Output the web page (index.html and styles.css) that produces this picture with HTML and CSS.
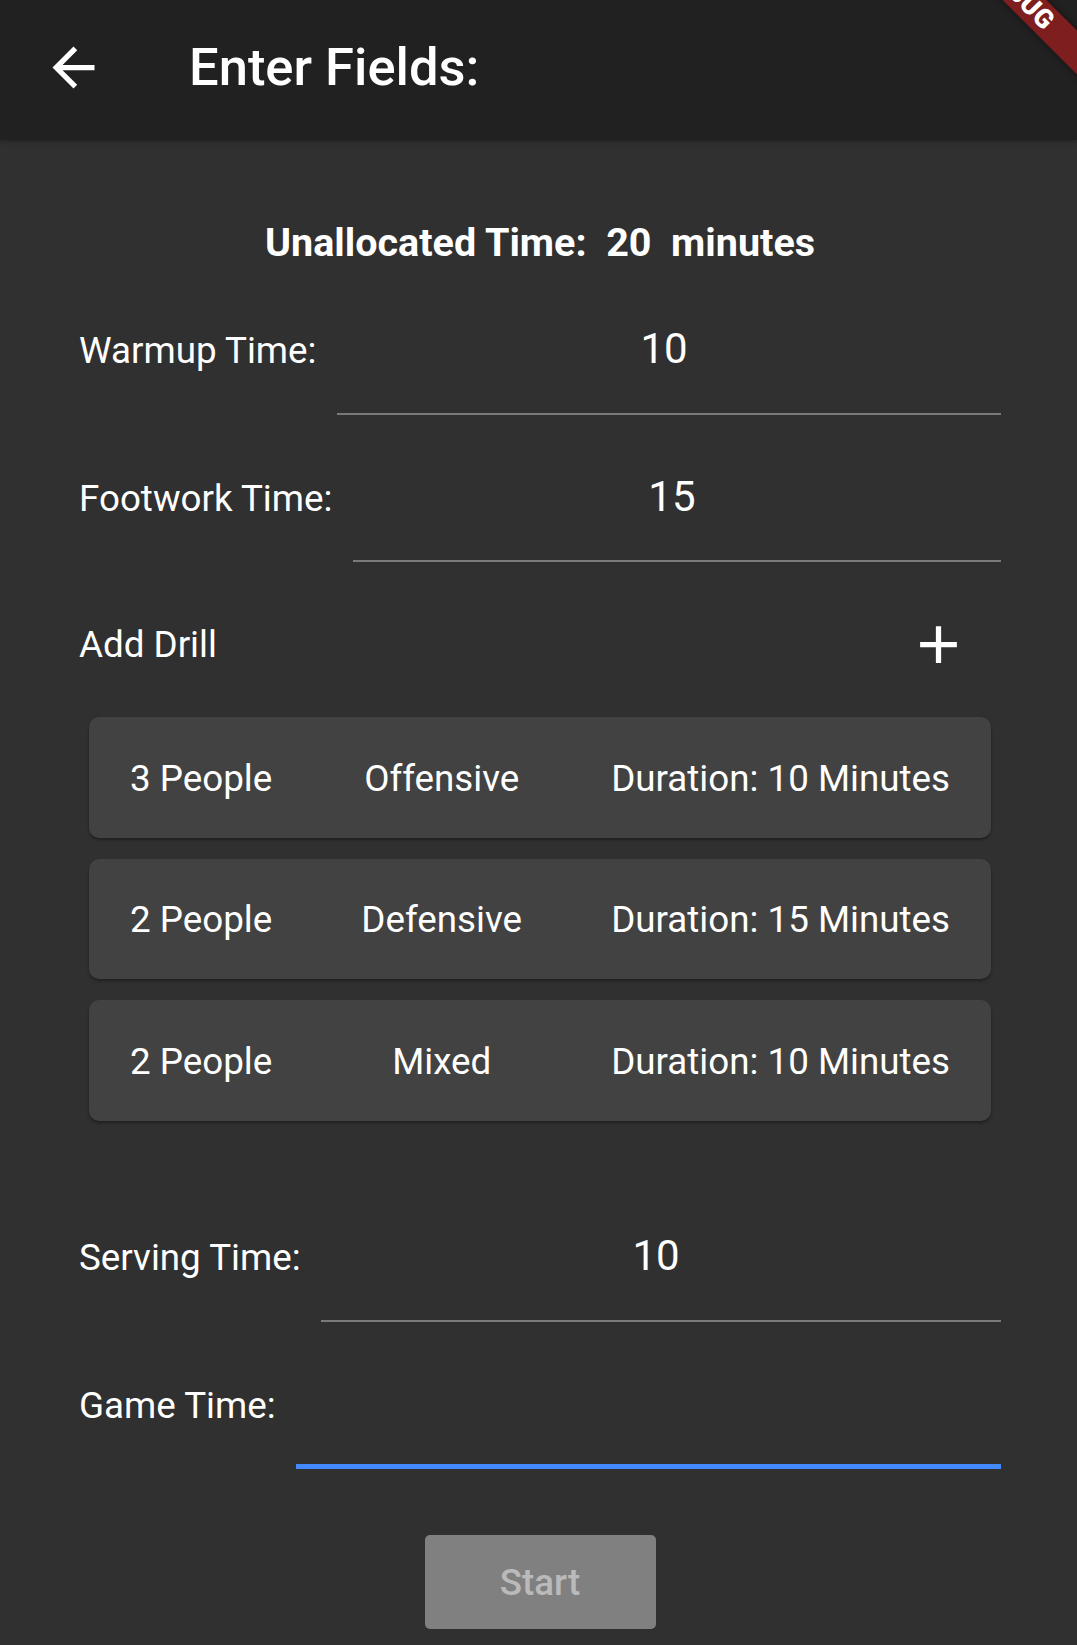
FILE: index.html
```
<!DOCTYPE html>
<html lang="en">
<head>
<meta charset="utf-8">
<title>Enter Fields</title>
<link rel="stylesheet" href="styles.css">
</head>
<body>
<div class="screen">
  <header class="appbar">
    <div class="leading">
      <svg class="icon" viewBox="0 0 24 24" width="63" height="63" aria-hidden="true"><path d="M20 11H7.83l5.59-5.59L12 4l-8 8 8 8 1.41-1.41L7.83 13H20v-2z" fill="#ffffff"/></svg>
    </div>
    <h1 class="title">Enter Fields:</h1>
    <div class="debug"><span>DEBUG</span></div>
  </header>

  <main class="content">
    <p class="unalloc">Unallocated Time:  20  minutes</p>

    <div class="field-row">
      <span class="label">Warmup Time:</span>
      <div class="input"><span class="value">10</span></div>
    </div>

    <div class="field-row">
      <span class="label">Footwork Time:</span>
      <div class="input"><span class="value">15</span></div>
    </div>

    <div class="drill-head">
      <span class="label">Add Drill</span>
      <button class="icon-btn" type="button" aria-label="Add drill">
        <svg viewBox="0 0 24 24" width="63" height="63" aria-hidden="true"><path d="M19 13h-6v6h-2v-6H5v-2h6V5h2v6h6v2z" fill="#ffffff"/></svg>
      </button>
    </div>

    <div class="cards">
      <div class="card"><span>3 People</span><span>Offensive</span><span>Duration: 10 Minutes</span></div>
      <div class="card"><span>2 People</span><span>Defensive</span><span>Duration: 15 Minutes</span></div>
      <div class="card"><span>2 People</span><span>Mixed</span><span>Duration: 10 Minutes</span></div>
    </div>

    <div class="field-row serving">
      <span class="label">Serving Time:</span>
      <div class="input"><span class="value">10</span></div>
    </div>

    <div class="field-row">
      <span class="label">Game Time:</span>
      <div class="input focused"><span class="value"></span></div>
    </div>

    <div class="actions">
      <button class="start" type="button">Start</button>
    </div>
  </main>
</div>
</body>
</html>
```

FILE: styles.css
```
html, body {
  margin: 0;
  padding: 0;
  background: #303030;
  overflow: hidden;
}

body {
  font-family: Roboto, "Noto Sans", "Liberation Sans", sans-serif;
  color: #ffffff;
}

.screen {
  width: 1077px;
  height: 1645px;
  overflow: hidden;
  background: #303030;
}

/* App bar */
.appbar {
  position: relative;
  height: 140px;
  box-sizing: border-box;
  padding-bottom: 6px;
  background: #212121;
  display: flex;
  align-items: center;
  overflow: hidden;
  box-shadow: 0 2px 4px rgba(0, 0, 0, 0.25);
}

.leading {
  width: 147px;
  height: 63px;
  display: flex;
  align-items: center;
  justify-content: center;
  flex: none;
}

.icon {
  display: block;
}

.title {
  margin: 0 0 0 42px;
  font-size: 52.5px;
  font-weight: 500;
  line-height: 62px;
  color: #ffffff;
}

.debug {
  position: absolute;
  left: 819px;
  top: -21.5px;
  width: 400px;
  height: 31px;
  background: #7f1e1e;
  transform: rotate(45deg);
  box-shadow: 0 0 6px rgba(0, 0, 0, 0.5);
  display: flex;
  align-items: center;
  justify-content: center;
}

.debug span {
  font-size: 26.5px;
  font-weight: 900;
  line-height: 1;
  color: #ffffff;
  letter-spacing: 0.5px;
}

/* Content */
.content {
  padding: 81px 76px 0 79px;
  display: flex;
  flex-direction: column;
}

.unalloc {
  margin: 0 0 22.5px;
  text-align: center;
  font-size: 39.5px;
  font-weight: 700;
  line-height: 43px;
  white-space: pre;
}

.label {
  font-size: 36.75px;
  line-height: 43px;
  white-space: nowrap;
  flex: none;
}

.field-row {
  height: 128px;
  display: flex;
  align-items: center;
  gap: 20.5px;
}

.field-row + .field-row {
  margin-top: 19.5px;
}

.input {
  flex: 1;
  align-self: stretch;
  box-sizing: border-box;
  border-bottom: 2.6px solid #7a7a7a;
  padding: 37.5px 10px 0 0;
  display: flex;
  justify-content: center;
  align-items: flex-start;
}

.input.focused {
  border-bottom: 5.25px solid #448aff;
}

.value {
  font-size: 42px;
  line-height: 49px;
  color: #ffffff;
}

/* Add drill */
.drill-head {
  margin-top: 19.5px;
  height: 126px;
  display: flex;
  align-items: center;
  justify-content: space-between;
}

.icon-btn {
  width: 126px;
  height: 126px;
  padding: 0;
  border: 0;
  background: transparent;
  display: flex;
  align-items: center;
  justify-content: center;
  cursor: pointer;
}

.icon-btn svg {
  display: block;
}

.cards {
  padding: 9.5px 10px 0;
  display: flex;
  flex-direction: column;
  gap: 21px;
}

.card {
  height: 120.5px;
  box-sizing: border-box;
  padding: 2px 41px 0;
  background: #424242;
  border-radius: 10px;
  box-shadow: 0 2px 3px rgba(0, 0, 0, 0.35);
  display: flex;
  align-items: center;
  justify-content: space-between;
  font-size: 36.75px;
  line-height: 43px;
  white-space: nowrap;
}

.field-row.serving {
  margin-top: 73px;
}

.actions {
  margin-top: 66px;
  display: flex;
  justify-content: center;
}

.start {
  width: 231px;
  height: 94px;
  border: 0;
  border-radius: 5px;
  background: #808080;
  color: #bababa;
  font-family: Roboto, "Noto Sans", "Liberation Sans", sans-serif;
  font-size: 36.75px;
  font-weight: 500;
  line-height: 43px;
  padding: 0;
}
```
